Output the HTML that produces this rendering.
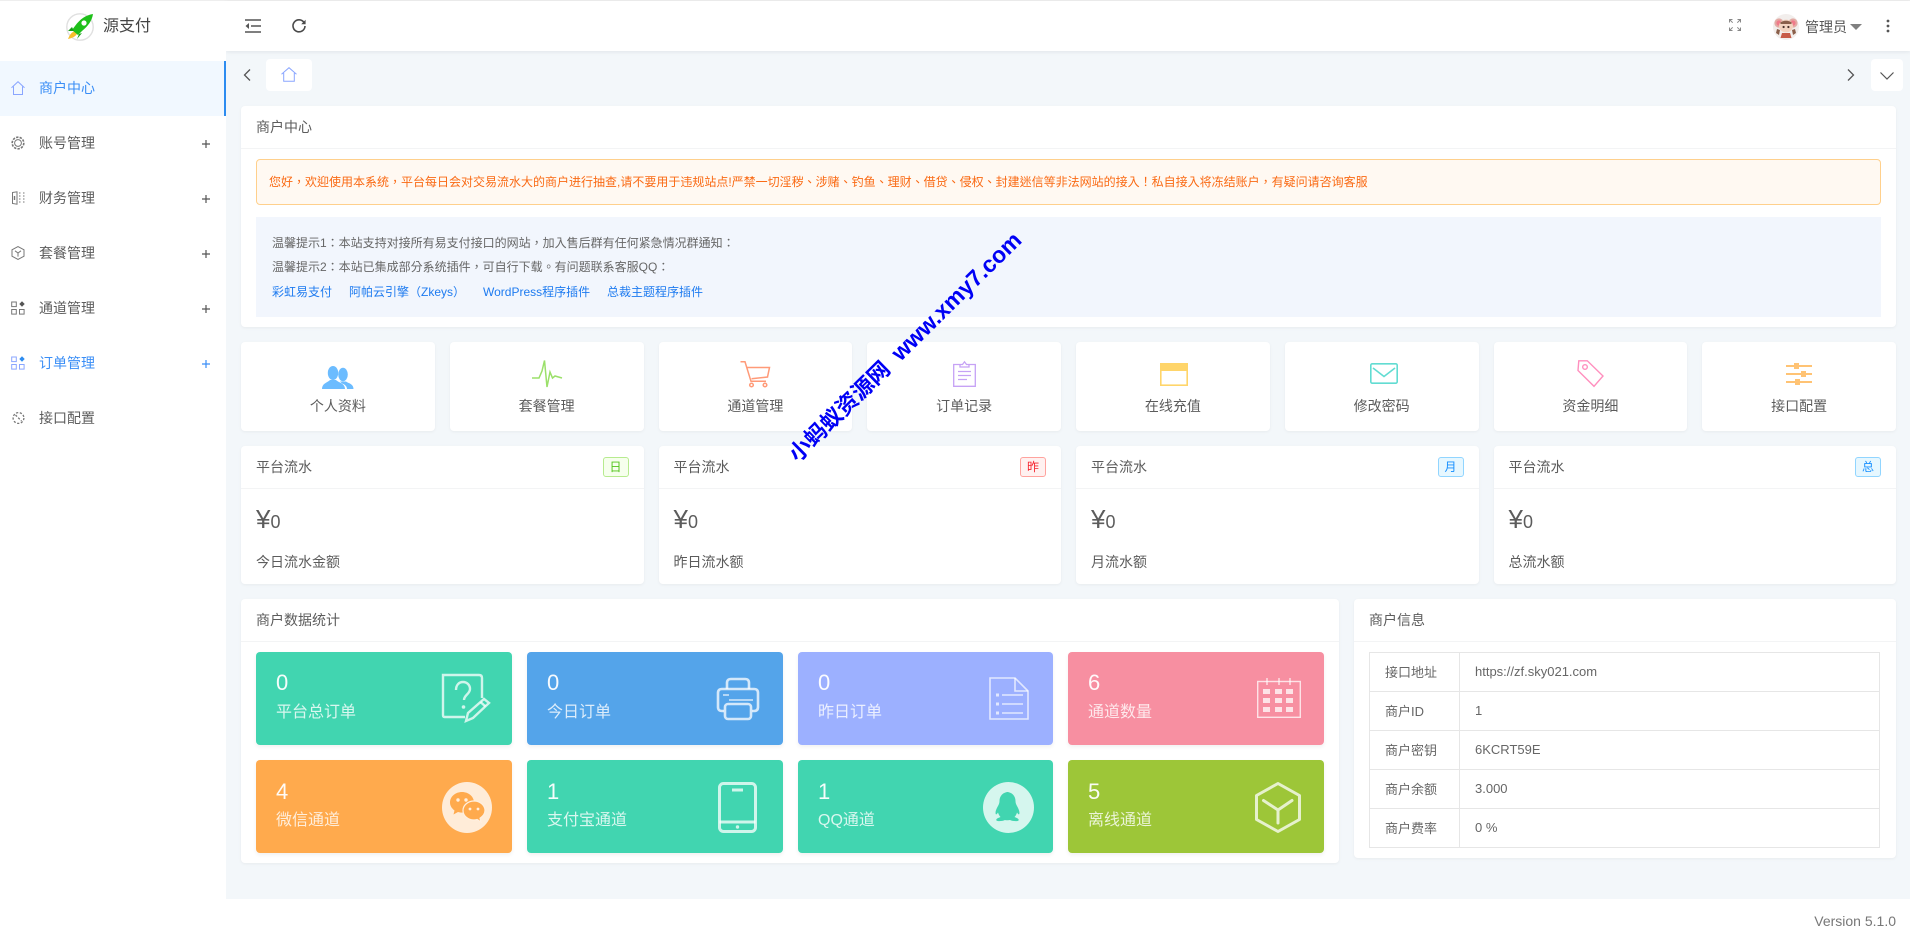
<!DOCTYPE html>
<html lang="zh-CN">
<head>
<meta charset="utf-8">
<title>源支付</title>
<style>
*{box-sizing:border-box;margin:0;padding:0}
html,body{width:1910px;height:932px;overflow:hidden;background:#f3f7fa;font-family:"Liberation Sans","Noto Sans CJK SC",sans-serif;color:#5c5c5c;font-size:14px}
.a{position:absolute;white-space:nowrap}
.t{position:absolute;white-space:nowrap;line-height:20px;height:20px}
.tc{font-family:"Liberation Sans","Noto Sans CJK TC",sans-serif}
svg{position:absolute;display:block;overflow:visible}
.card{position:absolute;background:#fff;border-radius:4px;box-shadow:0 1px 3px rgba(0,0,0,.05)}
.hl{position:absolute;left:0;right:0;height:1px;background:#f3f4f5}
.tile{position:absolute;border-radius:4px;color:#fff;box-shadow:0 2px 4px rgba(0,0,0,.06)}
.num{position:absolute;left:20px;font-size:22px;line-height:26px;color:rgba(255,255,255,.95)}
.lab{position:absolute;left:20px;font-size:16px;line-height:22px;color:rgba(255,255,255,.8);white-space:nowrap}
.tag{position:absolute;width:26px;height:20px;top:11px;right:15px;border:1px solid;border-radius:3px;text-align:center;font-size:12px;line-height:18px}
.lk{position:absolute;white-space:nowrap;color:#1e7bf0;font-size:12px;line-height:20px;top:282px}
.sc{position:absolute;top:396px;width:193.75px;text-align:center;line-height:20px}
td{border:1px solid #e6e6e6;font-size:13px;padding:0 15px 2px;height:39px;color:#666}
</style>
</head>
<body>
<!-- top strip -->
<div class="a" style="left:0;top:0;width:1910px;height:1px;background:#eee"></div>
<!-- topbar -->
<div class="a" style="left:226px;top:1px;width:1684px;height:50px;background:#fff;box-shadow:0 1px 4px rgba(0,21,41,.08)"></div>
<!-- sidebar -->
<div class="a" style="left:0;top:1px;width:226px;height:931px;background:#fff"></div>
<!-- logo -->
<svg style="left:66px;top:13px" width="28" height="28" viewBox="0 0 28 28">
<circle cx="14" cy="14" r="13.2" fill="#fff" stroke="#e0e0e0" stroke-width="1.4"/>
<path d="M2 26 C4 21 6 19 9 18 L11 21 C9 24 6 25 2 26Z" fill="#f6c02c"/>
<path d="M27 1 C20 2 14 6 9 13 L6 17 L12 22 L16 18 C22 13 26 8 27 1Z" fill="#1ec01a"/>
<path d="M6 14 L2 18 L8 18Z M13 21 L11 26 L16 20Z" fill="#17a016"/>
<circle cx="18" cy="10" r="2.6" fill="#fff"/>
</svg>
<div class="t" style="left:103px;top:17px;font-size:16px;color:#444">源支付</div>

<!-- sidebar items -->
<div class="a" style="left:0;top:61px;width:226px;height:55px;background:#f1f8ff;border-right:2px solid #2d8cf0"></div>
<svg style="left:11px;top:81px" width="14" height="14" viewBox="0 0 14 14" fill="none" stroke="#8aa6ff" stroke-width="1"><path d="M.5 6.7 7 .7l6.5 6M2.500 5.500v8h9v-8"/></svg>
<div class="t" style="left:39px;top:78px;color:#3a8ef6">商户中心</div>

<svg style="left:11px;top:136px" width="14" height="14" viewBox="0 0 14 14" fill="none" stroke="#777" stroke-width="1"><circle cx="7" cy="7" r="3.4"/><circle cx="7" cy="7" r="5.8" stroke-dasharray="2.4 1.2" stroke-width="1.6"/></svg>
<div class="t" style="left:39px;top:133px">账号管理</div>
<svg style="left:202px;top:140px" width="8" height="8" viewBox="0 0 8 8" stroke="#555" stroke-width="1.200"><path d="M0 4h8M4 0v8"/></svg>

<svg style="left:12px;top:191px" width="13" height="14" viewBox="0 0 13 14" fill="none" stroke="#777" stroke-width="1"><path d="M.5 1.500 5 .8v12.400l-4.500-.7z"/><path d="M7 2h2M7 5h2M7 8h2M7 11h2M11 2h2M11 5h2M11 8h2M11 11h2" stroke-dasharray="1 .5"/><path d="M2.500 5v4" stroke-width="1.400"/></svg>
<div class="t" style="left:39px;top:188px">财务管理</div>
<svg style="left:202px;top:195px" width="8" height="8" viewBox="0 0 8 8" stroke="#555" stroke-width="1.200"><path d="M0 4h8M4 0v8"/></svg>

<svg style="left:11px;top:246px" width="14" height="14" viewBox="0 0 14 14" fill="none" stroke="#777" stroke-width="1"><path d="M7 .6 13 3.800v6.400L7 13.400 1 10.200V3.800z"/><path d="M4 4.800 7 7l3-2.200M7 7v3.600"/></svg>
<div class="t" style="left:39px;top:243px">套餐管理</div>
<svg style="left:202px;top:250px" width="8" height="8" viewBox="0 0 8 8" stroke="#555" stroke-width="1.200"><path d="M0 4h8M4 0v8"/></svg>

<svg style="left:11px;top:301px" width="14" height="14" viewBox="0 0 14 14" fill="none" stroke="#777" stroke-width="1"><rect x=".7" y="1" width="4.600" height="4.600"/><rect x=".7" y="8.500" width="4.600" height="4.600"/><rect x="8.500" y="8.500" width="4.600" height="4.600"/><path d="M11 .3 13.700 3 11 5.700 8.300 3z" fill="#555" stroke="none"/></svg>
<div class="t" style="left:39px;top:298px">通道管理</div>
<svg style="left:202px;top:305px" width="8" height="8" viewBox="0 0 8 8" stroke="#555" stroke-width="1.200"><path d="M0 4h8M4 0v8"/></svg>

<svg style="left:11px;top:356px" width="14" height="14" viewBox="0 0 14 14" fill="none" stroke="#8aa6ff" stroke-width="1"><rect x=".7" y="1" width="4.600" height="4.600"/><rect x=".7" y="8.500" width="4.600" height="4.600"/><rect x="8.500" y="8.500" width="4.600" height="4.600"/><path d="M11 .3 13.700 3 11 5.700 8.300 3z" fill="#2d8cf0" stroke="none"/></svg>
<div class="t" style="left:39px;top:353px;color:#3a8ef6">订单管理</div>
<svg style="left:202px;top:360px" width="8" height="8" viewBox="0 0 8 8" stroke="#3a8ef6" stroke-width="1.200"><path d="M0 4h8M4 0v8"/></svg>

<svg style="left:12px;top:411px" width="13" height="14" viewBox="0 0 13 14" fill="none" stroke="#777" stroke-width="1.300" stroke-dasharray="2.200 1.600"><circle cx="6.500" cy="7" r="5.400"/><path d="M3.500 4 9.500 10"/></svg>
<div class="t" style="left:39px;top:408px">接口配置</div>

<!-- topbar icons -->
<svg style="left:245px;top:19px" width="16" height="14" viewBox="0 0 16 14" fill="none" stroke="#555" stroke-width="1.400"><path d="M0 1h16M6 7h10M0 13h16"/><path d="M4 4v6L.5 7z" fill="#555" stroke="none"/></svg>
<svg style="left:292px;top:19px" width="14" height="14" viewBox="0 0 14 14" fill="none" stroke="#4a4a4a" stroke-width="1.600"><path d="M12 3.500A6 6 0 1 0 13 7"/><path d="M13.600.8v4.400H9.200z" fill="#4a4a4a" stroke="none"/></svg>
<svg style="left:1729px;top:19px" width="12" height="12" viewBox="0 0 12 12" fill="none" stroke="#888" stroke-width="1"><path d="M.5 3.500v-3h3M.5.5l3.200 3.200M11.500 3.500v-3h-3M11.500.5 8.300 3.700M.5 8.500v3h3M.5 11.500l3.200-3.200M11.500 8.500v3h-3M11.500 11.500 8.300 8.300"/></svg>
<svg style="left:1773px;top:14px" width="26" height="26" viewBox="0 0 26 26">
<circle cx="13" cy="13" r="13" fill="#f2eeec"/>
<circle cx="6" cy="9" r="4.600" fill="#e2aaa4"/><circle cx="20" cy="9" r="4.600" fill="#e2aaa4"/>
<circle cx="6" cy="9" r="2.600" fill="#f07a8a"/><circle cx="20" cy="9" r="2.600" fill="#f07a8a"/>
<ellipse cx="13" cy="12" rx="7" ry="6.400" fill="#f3d3bf"/>
<path d="M7 9c2-3 10-3 12 0l-1 1H8z" fill="#8a5f4a"/>
<circle cx="10.600" cy="13" r="1.100" fill="#4a3028"/><circle cx="15.400" cy="13" r="1.100" fill="#4a3028"/>
<path d="M9 19h8l1.500 5h-11z" fill="#c75a46"/><path d="M4 15l3 1-1 5-3-2z M22 15l-3 1 1 5 3-2z" fill="#8a5f4a"/>
</svg>
<div class="t" style="left:1805px;top:17px;color:#555">管理员</div>
<div class="a" style="left:1850px;top:24px;width:0;height:0;border-left:6px solid transparent;border-right:6px solid transparent;border-top:6px solid #808080"></div>
<svg style="left:1886px;top:19px" width="4" height="14" viewBox="0 0 4 14" fill="#555"><circle cx="2" cy="2" r="1.400"/><circle cx="2" cy="7" r="1.400"/><circle cx="2" cy="12" r="1.400"/></svg>

<!-- tab row -->
<svg style="left:243px;top:69px" width="8" height="12" viewBox="0 0 8 12" fill="none" stroke="#555" stroke-width="1.300"><path d="M7 .5 1.500 6 7 11.500"/></svg>
<div class="a" style="left:266px;top:59px;width:46px;height:32px;background:#fff;border-radius:4px"></div>
<svg style="left:281px;top:67px" width="16" height="15" viewBox="0 0 16 15" fill="none" stroke="#8aa6ff" stroke-width="1"><path d="M.5 7.200 8 .7l7.500 6.500M2.700 6v8.300h10.600V6"/></svg>
<svg style="left:1847px;top:69px" width="8" height="12" viewBox="0 0 8 12" fill="none" stroke="#555" stroke-width="1.300"><path d="M1 .5 6.500 6 1 11.500"/></svg>
<div class="a" style="left:1871px;top:59px;width:32px;height:32px;background:#fff;border-radius:4px"></div>
<svg style="left:1880px;top:72px" width="14" height="8" viewBox="0 0 14 8" fill="none" stroke="#555" stroke-width="1.200"><path d="M.5.500 7 7 13.500.500"/></svg>

<!-- notice card -->
<div class="card" style="left:241px;top:106px;width:1655px;height:221px">
  <div class="hl" style="top:42px"></div>
</div>
<div class="t" style="left:256px;top:117px">商户中心</div>
<div class="a" style="left:256px;top:159px;width:1625px;height:46px;background:#fff9f2;border:1px solid #ffd08c;border-radius:4px"></div>
<div class="t tc" lang="zh-TW" style="left:269px;top:172px;font-size:12px;color:#fa6a14">您好，欢迎使用本系统，平台每日会对交易流水大的商户进行抽查,请不要用于违规站点!严禁一切淫秽、涉赌、钓鱼、理财、借贷、侵权、封建迷信等非法网站的接入！私自接入将冻结账户，有疑问请咨询客服</div>
<div class="a" style="left:256px;top:217px;width:1625px;height:100px;background:#f2f6fd"></div>
<div class="t tc" lang="zh-TW" style="left:272px;top:233px;font-size:12px;color:#666">温馨提示1：本站支持对接所有易支付接口的网站，加入售后群有任何紧急情况群通知：</div>
<div class="t tc" lang="zh-TW" style="left:272px;top:257px;font-size:12px;color:#666">温馨提示2：本站已集成部分系统插件，可自行下载。有问题联系客服QQ：</div>
<div class="lk" style="left:272px">彩虹易支付</div>
<div class="lk tc" lang="zh-TW" style="left:349px">阿帕云引擎（Zkeys）</div>
<div class="lk" style="left:483px">WordPress程序插件</div>
<div class="lk" style="left:607px">总裁主题程序插件</div>

<!-- shortcut cards -->
<div class="card" style="left:241px;top:342px;width:193.75px;height:89px"></div>
<div class="card" style="left:449.75px;top:342px;width:193.75px;height:89px"></div>
<div class="card" style="left:658.5px;top:342px;width:193.75px;height:89px"></div>
<div class="card" style="left:867.25px;top:342px;width:193.75px;height:89px"></div>
<div class="card" style="left:1076px;top:342px;width:193.75px;height:89px"></div>
<div class="card" style="left:1284.75px;top:342px;width:193.75px;height:89px"></div>
<div class="card" style="left:1493.5px;top:342px;width:193.75px;height:89px"></div>
<div class="card" style="left:1702.25px;top:342px;width:193.75px;height:89px"></div>
<div class="sc" style="left:241px">个人资料</div>
<div class="sc" style="left:449.75px">套餐管理</div>
<div class="sc" style="left:658.5px">通道管理</div>
<div class="sc" style="left:867.25px">订单记录</div>
<div class="sc" style="left:1076px">在线充值</div>
<div class="sc" style="left:1284.75px">修改密码</div>
<div class="sc" style="left:1493.5px">资金明细</div>
<div class="sc" style="left:1702.25px">接口配置</div>

<svg style="left:322px;top:366px" width="32" height="23" viewBox="0 0 32 23" fill="#6cbcff"><ellipse cx="21" cy="8.500" rx="4.800" ry="6.800"/><path d="M25 23h6.500c0-5-4.500-5.500-7.500-7.500h-6l2 2c3 1 5 3 5 5.500z"/><ellipse cx="11" cy="7" rx="5.200" ry="7"/><path d="M0 23c0-6 6-6.500 8-9h6c2 2.500 9 3 9 9z"/></svg>
<svg style="left:532px;top:360px" width="30" height="28" viewBox="0 0 30 28" fill="none" stroke-width="1.500" stroke="#9be06a"><path d="M0 18h7l3-7 2.500-10.500L15 27l3-15 2.500 6 2.500-2 7 2"/></svg>
<svg style="left:740px;top:361px" width="30" height="27" viewBox="0 0 30 27" fill="none" stroke="#ff9a78" stroke-width="1.500"><path d="M.5.800H5l6 19.500h15M7 6.500h22.500l-2 9.500-16 1.700"/><circle cx="11.500" cy="24" r="1.800"/><circle cx="25" cy="24" r="1.800"/></svg>
<svg style="left:953px;top:361px" width="23" height="26" viewBox="0 0 23 26" fill="none" stroke="#c6a2f5" stroke-width="1.300"><path d="M7 3.500H.7v21.800h21.600V3.500H16M7 6h9V3.500h-2.500L11.500.8 9.500 3.500H7z"/><path d="M5 10.500h13M5 14.500h13M5 18.500h9"/></svg>
<svg style="left:1160px;top:363px" width="28" height="23" viewBox="0 0 28 23"><rect x=".8" y=".8" width="26.400" height="21.400" fill="#fff" stroke="#ffd56a" stroke-width="1.600"/><rect width="28" height="8" fill="#ffd56a"/></svg>
<svg style="left:1370px;top:363px" width="28" height="21" viewBox="0 0 28 21" fill="none" stroke="#62dcd2" stroke-width="1.600"><rect x=".8" y=".8" width="26.400" height="19.400" rx="1.500"/><path d="M3 5l11 8.500L25 5"/></svg>
<svg style="left:1577px;top:360px" width="27" height="27" viewBox="0 0 27 27" fill="none" stroke="#ff8fbe" stroke-width="1.400"><path d="M1.800.8h8.500L26 16 17 26.300 1 10.500z"/><circle cx="8" cy="7" r="2.300"/></svg>
<svg style="left:1786px;top:362px" width="26" height="24" viewBox="0 0 26 24" stroke="#ffc374" fill="#ffc374" stroke-width="2"><path d="M0 4h26M0 12h26M0 20h26" /><rect x="8" y="1" width="5" height="6" stroke="none"/><rect x="15" y="9" width="5" height="6" stroke="none"/><rect x="9" y="17" width="5" height="6" stroke="none"/></svg>

<!-- flow cards -->
<div class="card" style="left:241px;top:446px;width:402.5px;height:138px"><div class="hl" style="top:42px"></div><div class="tag" style="border-color:#b7eb8f;background:#f6ffed;color:#52c41a">日</div></div>
<div class="card" style="left:658.5px;top:446px;width:402.5px;height:138px"><div class="hl" style="top:42px"></div><div class="tag" style="border-color:#ffa39e;background:#fff1f0;color:#f5222d">昨</div></div>
<div class="card" style="left:1076px;top:446px;width:402.5px;height:138px"><div class="hl" style="top:42px"></div><div class="tag" style="border-color:#91d5ff;background:#e6f7ff;color:#1890ff">月</div></div>
<div class="card" style="left:1493.5px;top:446px;width:402.5px;height:138px"><div class="hl" style="top:42px"></div><div class="tag" style="border-color:#91d5ff;background:#e6f7ff;color:#1890ff">总</div></div>

<div class="t" style="left:256px;top:457px">平台流水</div>
<div class="t" style="left:673.5px;top:457px">平台流水</div>
<div class="t" style="left:1091px;top:457px">平台流水</div>
<div class="t" style="left:1508.5px;top:457px">平台流水</div>
<div class="a" style="left:256px;top:504px;line-height:30px;font-size:26px">¥<span style="font-size:18px">0</span></div>
<div class="a" style="left:673.5px;top:504px;line-height:30px;font-size:26px">¥<span style="font-size:18px">0</span></div>
<div class="a" style="left:1091px;top:504px;line-height:30px;font-size:26px">¥<span style="font-size:18px">0</span></div>
<div class="a" style="left:1508.5px;top:504px;line-height:30px;font-size:26px">¥<span style="font-size:18px">0</span></div>
<div class="t" style="left:256px;top:552px">今日流水金额</div>
<div class="t" style="left:673.5px;top:552px">昨日流水额</div>
<div class="t" style="left:1091px;top:552px">月流水额</div>
<div class="t" style="left:1508.5px;top:552px">总流水额</div>

<!-- stats card -->
<div class="card" style="left:241px;top:599px;width:1098px;height:264px"><div class="hl" style="top:42px"></div></div>
<div class="t" style="left:256px;top:610px">商户数据统计</div>

<div class="tile" style="left:256px;top:652px;width:256px;height:93px;background:#41d5b0"><div class="num" style="top:18px">0</div><div class="lab" style="top:50px">平台总订单</div></div>
<div class="tile" style="left:527px;top:652px;width:256px;height:93px;background:#54a4ea"><div class="num" style="top:18px">0</div><div class="lab" style="top:50px">今日订单</div></div>
<div class="tile" style="left:798px;top:652px;width:255px;height:93px;background:#9cb0ff"><div class="num" style="top:18px">0</div><div class="lab" style="top:50px">昨日订单</div></div>
<div class="tile" style="left:1068px;top:652px;width:256px;height:93px;background:#f78fa1"><div class="num" style="top:18px">6</div><div class="lab" style="top:50px">通道数量</div></div>
<div class="tile" style="left:256px;top:760px;width:256px;height:93px;background:#ffaa4d"><div class="num" style="top:19px">4</div><div class="lab" style="top:50px">微信通道</div></div>
<div class="tile" style="left:527px;top:760px;width:256px;height:93px;background:#41d5b0"><div class="num" style="top:19px">1</div><div class="lab" style="top:50px">支付宝通道</div></div>
<div class="tile" style="left:798px;top:760px;width:255px;height:93px;background:#41d5b0"><div class="num" style="top:19px">1</div><div class="lab" style="top:50px">QQ通道</div></div>
<div class="tile" style="left:1068px;top:760px;width:256px;height:93px;background:#9dc638"><div class="num" style="top:19px">5</div><div class="lab" style="top:50px">离线通道</div></div>

<svg style="left:442px;top:674px" width="48" height="49" viewBox="0 0 48 49" fill="none" stroke="#fff" stroke-opacity=".75" stroke-width="2.400"><path d="M23 43H2.500Q1 43 1 41V1h36q3 0 3 3v20"/><path d="M14 16c0-5 3-8 7-8s7 3 7 7c0 5-6 6-6 11"/><circle cx="21.500" cy="33" r="1.800" fill="#fff" fill-opacity=".75" stroke="none"/><path d="M24 47l2-8L42 25l5 4-16 15z"/><path d="M38.500 28l5 4.500"/></svg>
<svg style="left:717px;top:678px" width="42" height="42" viewBox="0 0 42 42" fill="none" stroke="#fff" stroke-opacity=".75" stroke-width="2.600"><path d="M10 11V5q0-4 4-4h14q4 0 4 4v6"/><path d="M7 33H5q-4 0-4-4V15q0-4 4-4h32q4 0 4 4v14q0 4-4 4h-2"/><rect x="8" y="26" width="26" height="15" rx="3"/><path d="M6 17h6M12 22h24" stroke-width="1.600"/></svg>
<svg style="left:989px;top:677px" width="40" height="43" viewBox="0 0 40 43" fill="none" stroke="#fff" stroke-opacity=".7" stroke-width="1.600"><path d="M1 1h25l13 13v28H1z"/><path d="M26 1v13h13M13 18h21M13 27h21M13 36h21"/><path d="M7 18h3M7 27h3M7 36h3" stroke-width="3"/></svg>
<svg style="left:1257px;top:678px" width="44" height="40" viewBox="0 0 44 40" fill="none" stroke="#fff" stroke-opacity=".75" stroke-width="1.400"><rect x=".7" y="3.500" width="42.600" height="35.800"/><path d="M10 0v7M22 0v7M33 0v7"/><g fill="#fff" fill-opacity=".75" stroke="none"><rect x="6" y="11" width="7" height="5"/><rect x="18" y="11" width="7" height="5"/><rect x="29" y="11" width="7" height="5"/><rect x="6" y="20" width="7" height="5"/><rect x="18" y="20" width="7" height="5"/><rect x="29" y="20" width="7" height="5"/><rect x="6" y="29" width="7" height="5"/><rect x="18" y="29" width="7" height="5"/><rect x="29" y="29" width="7" height="5"/></g></svg>
<svg style="left:442px;top:782px" width="50" height="51" viewBox="0 0 50 51"><ellipse cx="25" cy="25.500" rx="25" ry="25.500" fill="#fff" fill-opacity=".78"/><path d="M20 10c-6.500 0-12 4.500-12 10.500 0 3.500 2 6 4.500 8l-1 4 4.500-2.500c1.500.4 3 .6 4.500.6C27 30.600 32 26 32 20.500 32 14.500 26.500 10 20 10z" fill="#ffaa4d"/><path d="M32 19c-6 0-11 4.200-11 9.500S26 38 32 38c1 0 2.200-.2 3.200-.5L39 40l-1-3.800c2.500-1.700 5-4.400 5-7.700C43 23.200 38 19 32 19z" fill="#ffaa4d" stroke="#ffefdf" stroke-width="1.200"/><g fill="#ffefdf"><circle cx="16" cy="18" r="1.700"/><circle cx="24" cy="18" r="1.700"/><circle cx="28" cy="27" r="1.400"/><circle cx="36" cy="27" r="1.400"/></g></svg>
<svg style="left:718px;top:782px" width="39" height="51" viewBox="0 0 39 51" fill="none" stroke="#fff" stroke-opacity=".75" stroke-width="3"><rect x="1.500" y="1.500" width="36" height="48" rx="4"/><path d="M1.500 40h36M14 8h11"/><circle cx="19.500" cy="45" r="1.700" fill="#fff" fill-opacity=".75" stroke="none"/></svg>
<svg style="left:983px;top:782px" width="51" height="51" viewBox="0 0 51 51"><circle cx="25.500" cy="25.500" r="25.500" fill="#fff" fill-opacity=".78"/><path d="M25.500 10c-5.500 0-9 4-9 9 0 1.500-.3 2.500-1 4-1.500 3-3.500 6-2.800 9 .4 1 1.300 0 2.300-1.500.6 2 1.500 3.500 2.500 4.500-2.500 1-5 2-4 3.500 1 1 6 .8 8.500-.5 1 .4 2 .4 5 0 2.500 1.300 7.500 1.500 8.500.5 1-1.500-1.500-2.500-4-3.500 1-1 2-2.500 2.500-4.500 1 1.500 1.900 2.500 2.300 1.500.7-3-1.300-6-2.800-9-.7-1.500-1-2.500-1-4 0-5-3.500-9-9-9z" fill="#41d5b0"/></svg>
<svg style="left:1255px;top:782px" width="46" height="51" viewBox="0 0 46 51" fill="none" stroke="#fff" stroke-opacity=".75" stroke-width="3" stroke-linecap="round" stroke-linejoin="round"><path d="M23 1.500 44.500 13.500v24L23 49.500 1.500 37.500v-24z"/><path d="M8.500 18.500 23 28l14-9.500M23 28v13"/></svg>

<!-- info card -->
<div class="card" style="left:1353.75px;top:599px;width:542.25px;height:259px"><div class="hl" style="top:42px"></div></div>
<div class="t" style="left:1369px;top:610px">商户信息</div>
<table style="position:absolute;left:1369px;top:652px;width:511px;border-collapse:collapse;table-layout:fixed">
<colgroup><col style="width:90px"><col></colgroup>
<tr><td>接口地址</td><td>https://zf.sky021.com</td></tr>
<tr><td>商户ID</td><td>1</td></tr>
<tr><td>商户密钥</td><td>6KCRT59E</td></tr>
<tr><td>商户余额</td><td>3.000</td></tr>
<tr><td>商户费率</td><td>0 %</td></tr>
</table>

<!-- footer -->
<div class="a" style="left:226px;top:899px;width:1684px;height:33px;background:#fff"></div>
<div class="a" style="right:14px;top:911px;line-height:20px;color:#777">Version 5.1.0</div>

<!-- watermark -->
<div class="a" style="left:905px;top:347px;transform:translate(-50%,-50%) rotate(-44.5deg);color:#0000f5;font-weight:bold;font-size:22px;line-height:26px">小蚂蚁资源网&nbsp;&nbsp;<span style="font-size:23px">www.xmy7.com</span></div>
</body>
</html>
